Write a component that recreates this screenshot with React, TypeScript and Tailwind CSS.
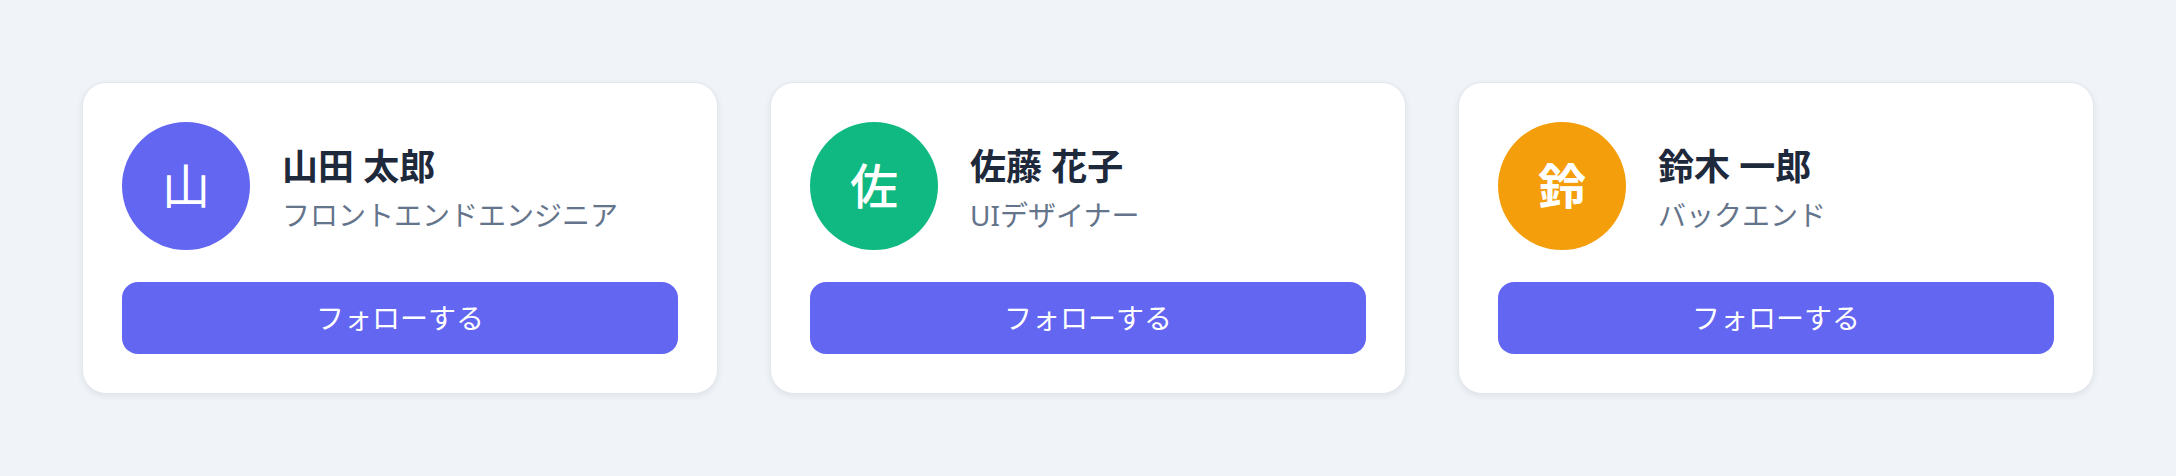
const users = [
  { initial: "山", name: "山田 太郎", role: "フロントエンドエンジニア", color: "bg-[#6366f1]", weight: "font-normal" },
  { initial: "佐", name: "佐藤 花子", role: "UIデザイナー", color: "bg-[#10b981]", weight: "font-medium" },
  { initial: "鈴", name: "鈴木 一郎", role: "バックエンド", color: "bg-[#f59e0b]", weight: "font-bold" },
]

function UserCard({ user }: { user: (typeof users)[number] }) {
  return (
    <div className="bg-white rounded-[24px] border border-[#e2e8f0] shadow-[0_2px_6px_rgba(15,23,42,0.08)] p-[39px] flex flex-col gap-[32px]">
      <div className="flex items-center gap-[32px]">
        <div
          className={`${user.color} ${user.weight} w-[128px] h-[128px] rounded-full flex items-center justify-center text-white text-[48px] shrink-0`}
        >
          {user.initial}
        </div>
        <div className="flex flex-col gap-[6px] pt-[8px]">
          <div className="text-[36px] leading-[44px] font-bold text-[#1e293b]">{user.name}</div>
          <div className="text-[28px] leading-[40px] text-[#64748b]">{user.role}</div>
        </div>
      </div>
      <button className="w-full h-[72px] rounded-[16px] bg-[#6366f1] text-white text-[28px]">
        フォローする
      </button>
    </div>
  )
}

export default function App() {
  return (
    <div
      className="min-h-[476px] bg-[#f0f4f8] px-[82px] py-[82px] grid grid-cols-3 gap-[52px] items-start"
      style={{ fontFamily: '"Noto Sans", "Noto Sans CJK JP", sans-serif' }}
    >
      {users.map((u) => (
        <UserCard key={u.name} user={u} />
      ))}
    </div>
  )
}
